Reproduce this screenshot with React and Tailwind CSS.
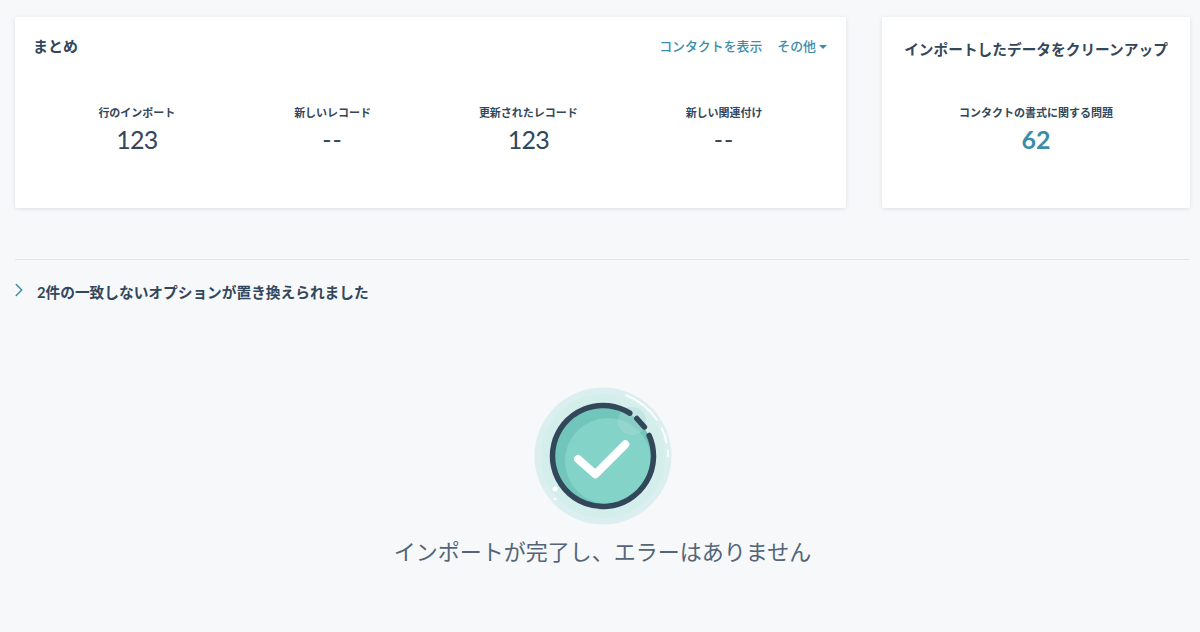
import React from 'react';
import { ChevronRight } from 'lucide-react';

const font = 'font-["Lato","Noto_Sans_CJK_JP",sans-serif]';

const stats = [
  { label: '行のインポート', value: '123' },
  { label: '新しいレコード', value: '--' },
  { label: '更新されたレコード', value: '123' },
  { label: '新しい関連付け', value: '--' },
];

function SuccessIcon() {
  return (
    <svg width="140" height="140" viewBox="0 0 140 140" fill="none">
      <circle cx="70" cy="70" r="68.5" fill="#dceff0" />
      <circle cx="70" cy="70" r="62" fill="#d3eeeb" />
      <circle cx="70" cy="70" r="50" fill="#72c5bb" />
      <circle cx="75" cy="75" r="43" fill="#84d3c9" />
      <circle cx="99" cy="35" r="14" fill="#a9dcd6" opacity="0.4" />
      <path d="M116.100 49.400A50.500 50.500 0 1 1 96.800 27.200" stroke="#33475b" strokeWidth="5.500" strokeLinecap="round" />
      <path d="M103.800 32.500L111.400 41" stroke="#33475b" strokeWidth="5.500" strokeLinecap="round" />
      <path d="M45 73L62.300 88.300L92.300 58.300" stroke="#fff" strokeWidth="8" strokeLinecap="round" strokeLinejoin="round" />
      <path d="M93.300 9.300A65 65 0 0 1 123.900 33.700" stroke="#fff" strokeWidth="1.800" strokeLinecap="round" />
      <path d="M128.900 42.500A65 65 0 0 1 133.600 56.500" stroke="#fff" strokeWidth="1.800" strokeLinecap="round" />
      <path d="M134.800 64.300L135 70" stroke="#fff" strokeWidth="1.800" strokeLinecap="round" />
      <circle cx="22" cy="103" r="2.500" fill="#fff" />
      <circle cx="22" cy="113" r="1.500" fill="#fff" />
    </svg>
  );
}

export default function App() {
  return (
    <div className={`${font} min-h-[632px] bg-[#f6f8fa] px-[15px] pt-[17px] text-[#33475b] overflow-hidden`}>
      <div className="flex gap-9 w-[1175px]">
        <div className="w-[831px] h-[191px] bg-white rounded-[2px] shadow-[0_1px_4px_rgba(45,62,80,0.12)] pl-[18px] pr-[19px] pt-5">
          <div className="flex items-center justify-between h-[18px]">
            <h2 className="text-[15px] leading-[18px] font-semibold">まとめ</h2>
            <div className="flex items-center gap-[15px] text-[12.9px] text-[#3d8da8] mt-[1px]">
              <span className="font-medium">コンタクトを表示</span>
              <span className="flex items-center gap-[3px] font-medium">
                その他
                <span className="w-0 h-0 border-x-[4px] border-x-transparent border-t-[4px] border-t-[#3d8da8]" />
              </span>
            </div>
          </div>
          <div className="grid grid-cols-4 w-[783px] ml-[6px] mt-[50px]">
            {stats.map((s, i) => (
              <div key={i} className="text-center">
                <div className="text-[11px] leading-[16px] font-semibold">{s.label}</div>
                <div className={s.value === '--' ? 'text-[25px] leading-[30px] mt-[3px] tracking-[1px]' : 'text-[25px] leading-[30px] mt-[3px] tracking-[-0.8px]'}>{s.value}</div>
              </div>
            ))}
          </div>
        </div>
        <div className="w-[308px] h-[191px] bg-white rounded-[2px] shadow-[0_1px_4px_rgba(45,62,80,0.12)] pt-[23px] text-center">
          <h2 className="text-[14.7px] leading-[18px] font-semibold">インポートしたデータをクリーンアップ</h2>
          <div className="text-[11px] leading-[16px] font-semibold mt-[47px]">コンタクトの書式に関する問題</div>
          <div className="text-[25px] leading-[30px] mt-[3px] font-bold text-[#3d8da8]">62</div>
        </div>
      </div>

      <div className="w-[1175px] border-t border-[#dfe3eb] mt-[51px] pt-[22px] flex items-center h-[43px]">
        <ChevronRight className="w-[22px] h-[22px] text-[#3d8da8] ml-[-7px] mt-[-4px]" strokeWidth={1.6} />
        <span className="ml-[7px] text-[14.7px] leading-[18px] font-bold">2件の一致しないオプションが置き換えられました</span>
      </div>

      <div className="flex flex-col items-center mt-[84px] w-[1175px]">
        <SuccessIcon />
        <p className="text-[22px] leading-[28px] text-[#536577] mt-[12px]">インポートが完了し、エラーはありません</p>
      </div>
    </div>
  );
}
